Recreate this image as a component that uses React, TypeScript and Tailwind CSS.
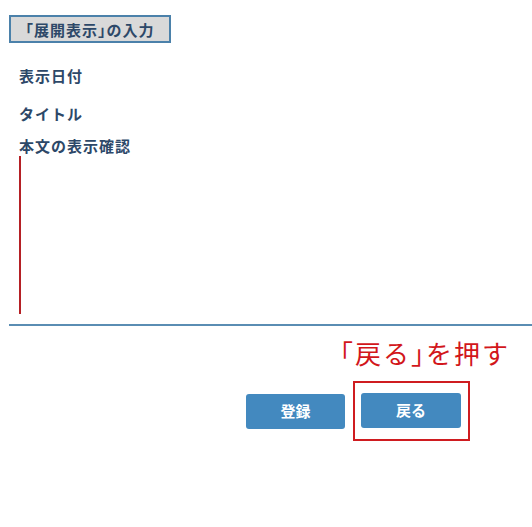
import React from "react";

const jp = { fontFamily: '"Noto Sans CJK JP", "Noto Sans", sans-serif' };

function Br({ c }: { c: string }) {
  return <span className="[font-feature-settings:'halt']">{c}</span>;
}

export default function App() {
  return (
    <div className="relative w-[532px] h-[527px] bg-white overflow-hidden" style={jp}>
      <div className="pt-[15px] pl-[9px]">
        <div className="w-[162px] h-[28px] border-2 border-[#4b81aa] bg-[#d9d9d9] flex items-center justify-center text-[15px] tracking-[1px] font-bold text-[#2d4868] leading-none">
          <span>
            <Br c="「" />展開表示<Br c="」" />の入力
          </span>
        </div>
        <div className="pl-[10px] text-[15px] tracking-[1px] font-bold text-[#2d4868]">
          <div className="mt-[23px] h-[20px] leading-[20px]">表示日付</div>
          <div className="mt-[18px] h-[20px] leading-[20px]">タイトル</div>
          <div className="mt-[12px] h-[20px] leading-[20px]">本文の表示確認</div>
          <div className="w-[2px] h-[158px] bg-[#b52025]"></div>
        </div>
        <div className="mt-[10px] h-[2px] bg-[#5a8db3]"></div>
      </div>
      <div className="absolute left-[340px] top-[337px] text-[26px] tracking-[2px] leading-[32px] text-[#d2161b] whitespace-nowrap">
        <Br c="「" />戻る<Br c="」" />を押す
      </div>
      <div className="mt-[55px] pl-[246px] flex items-center">
        <button className="w-[99px] h-[35px] rounded-[3px] bg-[#4389bf] text-white text-[15px] font-bold">登録</button>
        <div className="ml-[8px] border-2 border-[#cf1c20] pl-[6px] pr-[7px] pt-[10px] pb-[11px]">
          <button className="w-[100px] h-[35px] rounded-[3px] bg-[#4389bf] text-white text-[15px] font-bold block">戻る</button>
        </div>
      </div>
    </div>
  );
}
